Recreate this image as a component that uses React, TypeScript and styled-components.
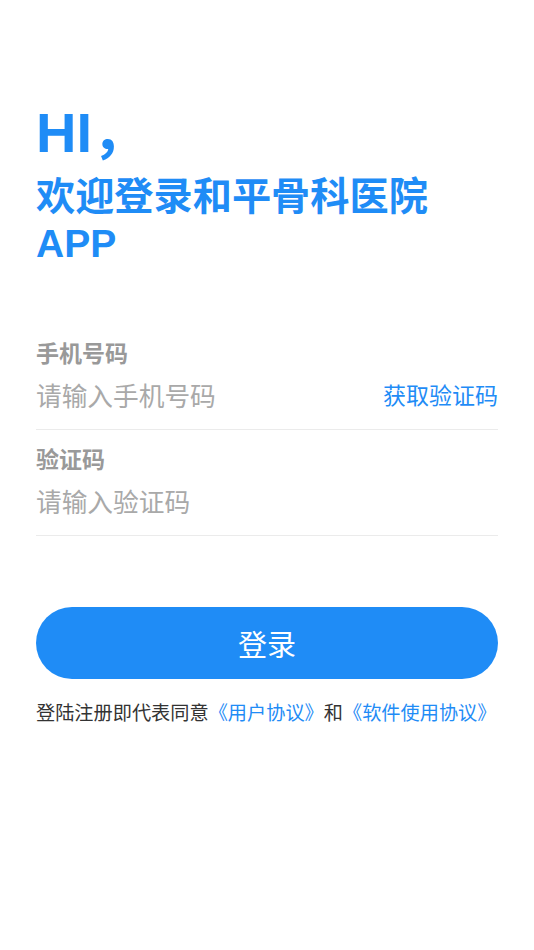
import React from 'react'
import styled, { createGlobalStyle } from 'styled-components'

const BLUE = '#1f8cf6'

const GlobalStyle = createGlobalStyle`
  html, body {
    margin: 0;
    padding: 0;
    background: #fff;
    font-family: "Noto Sans CJK SC", "Noto Sans", sans-serif;
  }
`

const Page = styled.div`
  display: flex;
  flex-direction: column;
  min-height: 950px;
  padding: 0 36px;
  box-sizing: border-box;
  background: #fff;
`

const Heading = styled.div`
  display: flex;
  flex-direction: column;
  margin-top: 93px;
  color: ${BLUE};
  font-weight: 700;
`

const Hi = styled.div`
  font-family: "Liberation Sans", "Noto Sans CJK SC", sans-serif;
  font-size: 56px;
  line-height: 70px;
`

const Comma = styled.span`
  font-family: "Noto Sans CJK SC", sans-serif;
`

const Welcome = styled.div`
  font-size: 39.2px;
  line-height: 50px;
  white-space: nowrap;
`

const AppName = styled.div`
  font-family: "Liberation Sans", sans-serif;
  font-size: 39px;
  line-height: 51px;
`

const Form = styled.div`
  display: flex;
  flex-direction: column;
  margin-top: 67px;
`

const Field = styled.div`
  display: flex;
  flex-direction: column;
  border-bottom: 1px solid #ebebeb;
  padding-bottom: 9px;
  margin-bottom: 12px;
`

const Label = styled.div`
  font-size: 23px;
  line-height: 32px;
  font-weight: 700;
  color: #999;
`

const InputRow = styled.div`
  display: flex;
  align-items: center;
  justify-content: space-between;
  height: 52px;
`

const Input = styled.input`
  flex: 1;
  min-width: 0;
  border: none;
  outline: none;
  padding: 0;
  font-family: inherit;
  font-size: 25.7px;
  color: #333;
  background: transparent;
  &::placeholder {
    color: #a9a9a9;
  }
`

const CodeLink = styled.span`
  font-size: 23px;
  color: ${BLUE};
  white-space: nowrap;
`

const LoginButton = styled.button`
  margin-top: 59px;
  height: 72px;
  border: none;
  border-radius: 36px;
  background: ${BLUE};
  color: #fff;
  font-family: inherit;
  font-size: 29px;
  cursor: pointer;
`

const Agreement = styled.div`
  margin-top: 19px;
  font-size: 19.2px;
  line-height: 28px;
  color: #333;
  white-space: nowrap;
`

const Link = styled.span`
  color: ${BLUE};
`

const App = () => (
  <>
    <GlobalStyle />
    <Page>
      <Heading>
        <Hi>
          HI<Comma>，</Comma>
        </Hi>
        <Welcome>欢迎登录和平骨科医院</Welcome>
        <AppName>APP</AppName>
      </Heading>

      <Form>
        <Field>
          <Label>手机号码</Label>
          <InputRow>
            <Input placeholder="请输入手机号码" />
            <CodeLink>获取验证码</CodeLink>
          </InputRow>
        </Field>
        <Field>
          <Label>验证码</Label>
          <InputRow>
            <Input placeholder="请输入验证码" />
          </InputRow>
        </Field>
      </Form>

      <LoginButton>登录</LoginButton>

      <Agreement>
        登陆注册即代表同意<Link>《用户协议》</Link>和<Link>《软件使用协议》</Link>
      </Agreement>
    </Page>
  </>
)

export default App
